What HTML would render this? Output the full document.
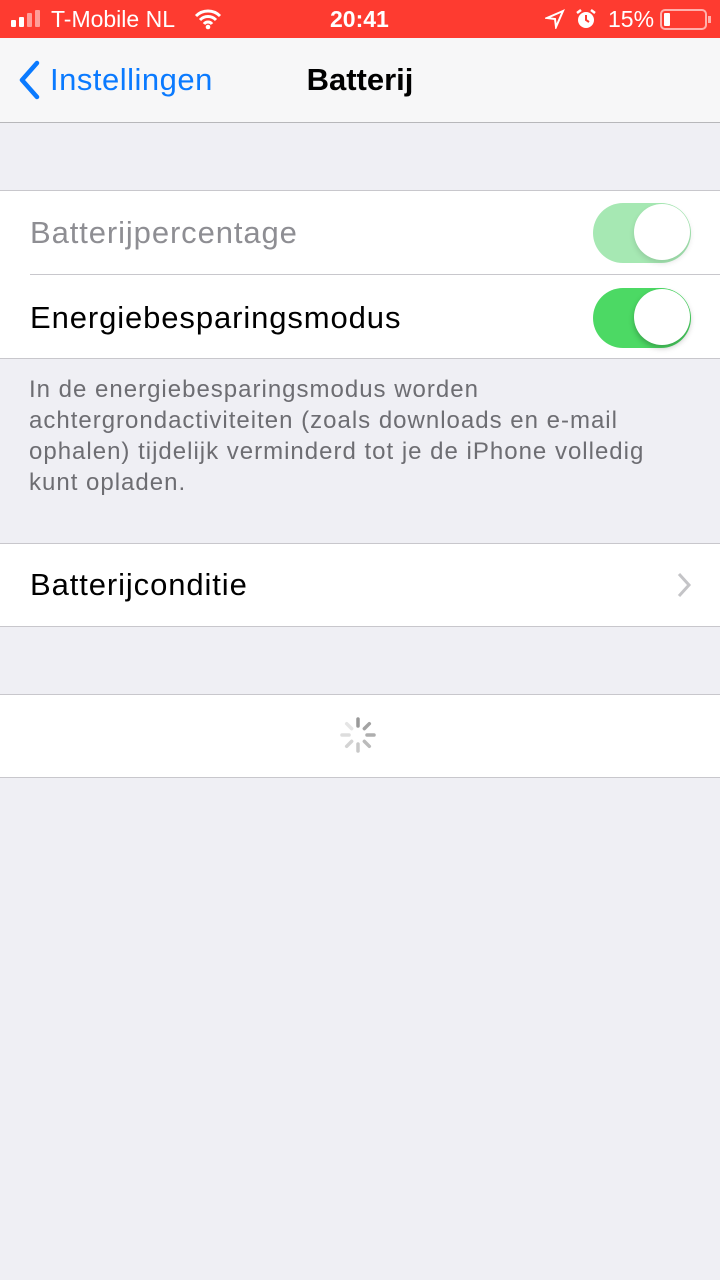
<!DOCTYPE html>
<html><head><meta charset="utf-8"><style>
*{margin:0;padding:0;box-sizing:border-box}
body{width:720px;height:1280px;background:#efeff4;font-family:"Liberation Sans",sans-serif;position:relative;overflow:hidden}
.abs{position:absolute}
.sb{left:0;top:0;width:720px;height:38px;background:#fe3b30;color:#fff;font-size:23px}
.nav{left:0;top:38px;width:720px;height:85px;background:#f7f7f8;border-bottom:1px solid #b7b7ba}
.grp{left:0;width:720px;background:#fff;border-top:1px solid #c8c7cc;border-bottom:1px solid #c8c7cc}
.lbl{position:absolute;left:30px;font-size:31px;color:#000;letter-spacing:0.9px}
.tog{position:absolute;left:593px;width:98px;height:60px;border-radius:30px}
.knob{position:absolute;right:1px;top:1px;width:56px;height:56px;border-radius:50%;background:#fff;box-shadow:0 3px 6px rgba(0,0,0,.25)}
</style></head><body>
<div class="abs sb">
  <div class="abs" style="left:11px;top:10px;display:flex;align-items:flex-end;gap:3px;height:17px">
    <span style="width:5px;height:7px;background:#fff;border-radius:1px"></span>
    <span style="width:5px;height:10px;background:#fff;border-radius:1px"></span>
    <span style="width:5px;height:14px;background:#fff;opacity:.5;border-radius:1px"></span>
    <span style="width:5px;height:17px;background:#fff;opacity:.5;border-radius:1px"></span>
  </div>
  <div class="abs" style="left:51px;top:6px">T-Mobile NL</div>
  <svg class="abs" style="left:194px;top:8px" width="28" height="22" viewBox="0 0 28 22"><path d="M2 8a17 17 0 0 1 24 0M6 12a11 11 0 0 1 16 0M10 16a5 5 0 0 1 8 0" stroke="#fff" stroke-width="3" fill="none"/><circle cx="14" cy="19" r="2.3" fill="#fff"/></svg>
  <div class="abs" style="left:330px;top:6px;font-weight:bold">20:41</div>
  <svg class="abs" style="left:545px;top:9px" width="20" height="20" viewBox="0 0 20 20"><path d="M18 2L2 9l8 1 1 8z" stroke="#fff" stroke-width="2" fill="none"/></svg>
  <svg class="abs" style="left:575px;top:8px" width="22" height="22" viewBox="0 0 22 22"><circle cx="11" cy="12" r="8" fill="#fff"/><path d="M11 7v5l3 2" stroke="#fe3b30" stroke-width="2" fill="none"/><path d="M2 5l4-3M20 5l-4-3" stroke="#fff" stroke-width="2.5"/></svg>
  <div class="abs" style="left:608px;top:6px">15%</div>
  <div class="abs" style="left:660px;top:9px;width:47px;height:21px;border:2px solid rgba(255,255,255,.6);border-radius:5px"><div style="position:absolute;left:2px;top:2px;width:6px;height:13px;background:#fff;border-radius:1px"></div></div>
  <div class="abs" style="left:708px;top:16px;width:3px;height:7px;background:rgba(255,255,255,.6)"></div>
</div>
<div class="abs nav">
  <svg class="abs" style="left:16px;top:22px" width="26" height="40" viewBox="0 0 26 40"><path d="M21 3L6 20l15 17" stroke="#0a7aff" stroke-width="4.5" fill="none" stroke-linecap="round" stroke-linejoin="round"/></svg>
  <div class="abs" style="left:50px;top:24px;font-size:31px;color:#0a7aff;letter-spacing:0.5px">Instellingen</div>
  <div class="abs" style="left:0;width:720px;text-align:center;top:24px;font-size:31px;font-weight:bold;color:#000">Batterij</div>
</div>
<div class="abs grp" style="top:190px;height:169px">
  <div class="lbl" style="top:24px;color:#8e8e93">Batterijpercentage</div>
  <div class="tog" style="top:12px;background:#a6e8b3"><div class="knob" style="box-shadow:0 3px 6px rgba(0,0,0,.12)"></div></div>
  <div class="abs" style="left:30px;right:0;top:83px;height:1px;background:#c8c7cc"></div>
  <div class="lbl" style="top:109px">Energiebesparingsmodus</div>
  <div class="tog" style="top:97px;background:#4cd964"><div class="knob"></div></div>
</div>
<div class="abs" style="left:29px;top:374px;width:690px;font-size:24px;line-height:31px;color:#6d6d72;letter-spacing:1px;white-space:nowrap">In de energiebesparingsmodus worden<br>achtergrondactiviteiten (zoals downloads en e-mail<br>ophalen) tijdelijk verminderd tot je de iPhone volledig<br>kunt opladen.</div>
<div class="abs grp" style="top:543px;height:84px">
  <div class="lbl" style="top:23px">Batterijconditie</div>
  <svg class="abs" style="left:676px;top:28px" width="16" height="26" viewBox="0 0 16 26"><path d="M3 2l10 11L3 24" stroke="#c4c4c7" stroke-width="3" fill="none"/></svg>
</div>
<div class="abs grp" style="top:694px;height:84px">
  <svg class="abs" style="left:339px;top:21px" width="38" height="38" viewBox="-19 -19 38 38">
    <g stroke-width="3.5" stroke-linecap="round">
      <line x1="0" y1="-9" x2="0" y2="-16" stroke="#999" transform="rotate(0)"/>
      <line x1="0" y1="-9" x2="0" y2="-16" stroke="#a3a3a3" transform="rotate(45)"/>
      <line x1="0" y1="-9" x2="0" y2="-16" stroke="#aeaeae" transform="rotate(90)"/>
      <line x1="0" y1="-9" x2="0" y2="-16" stroke="#bbb" transform="rotate(135)"/>
      <line x1="0" y1="-9" x2="0" y2="-16" stroke="#c8c8c8" transform="rotate(180)"/>
      <line x1="0" y1="-9" x2="0" y2="-16" stroke="#d3d3d3" transform="rotate(225)"/>
      <line x1="0" y1="-9" x2="0" y2="-16" stroke="#ddd" transform="rotate(270)"/>
      <line x1="0" y1="-9" x2="0" y2="-16" stroke="#e5e5e5" transform="rotate(315)"/>
    </g>
  </svg>
</div>
</body></html>
